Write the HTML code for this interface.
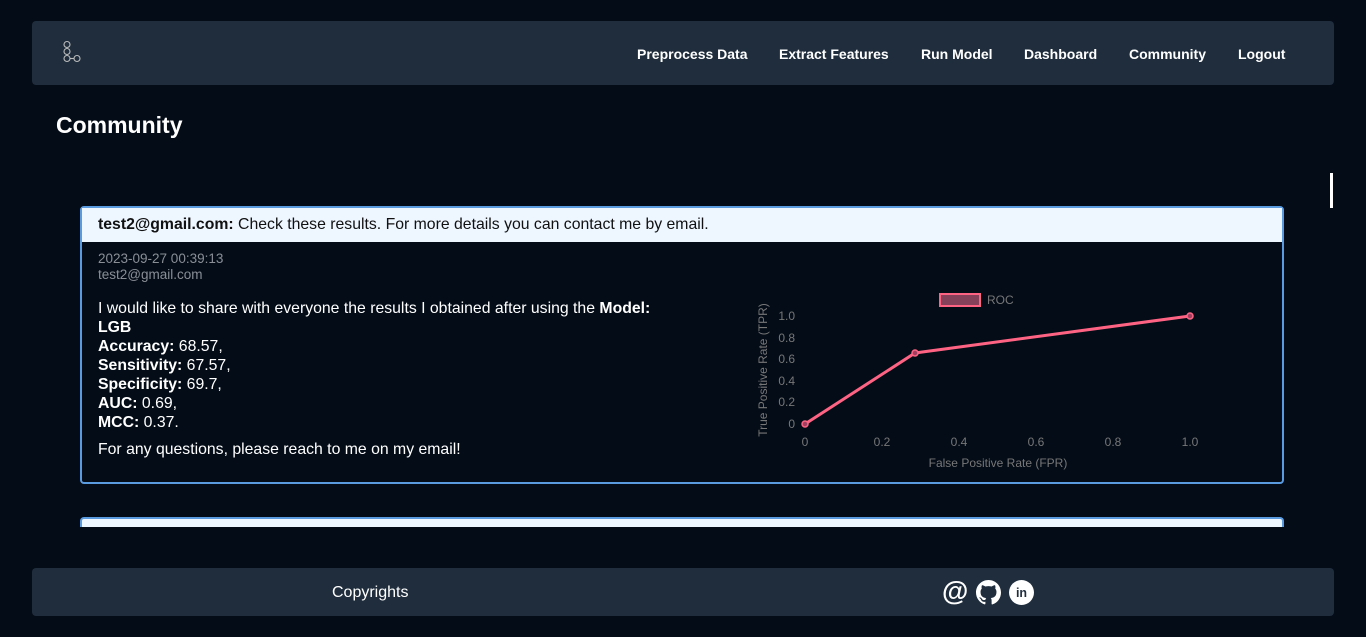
<!DOCTYPE html>
<html><head><meta charset="utf-8"><style>
body{margin:0;background:#040c17;width:1366px;height:637px;overflow:hidden;font-family:"Liberation Sans",sans-serif;position:relative;color:#fff}
.nav{position:absolute;left:32px;top:21px;width:1302px;height:64px;background:#1f2d3d;border-radius:4px}
.nav a{position:absolute;top:25px;font-size:14px;font-weight:bold;color:#fff}
h1{position:absolute;left:56px;top:112px;margin:0;font-size:23px;font-weight:bold}
.card{position:absolute;left:80px;top:206px;width:1200px;height:274px;border:2px solid #5a9be0;border-radius:4px;background:#040c17}
.hd{background:#eef6ff;color:#111;height:34px;line-height:34px;padding-left:16px;font-size:15.8px}
.meta{position:absolute;left:16px;top:43px;font-size:13.5px;color:#8a8f96;line-height:16px}
.body{position:absolute;left:16px;top:91px;font-size:15.8px;line-height:19px}
.card2{position:absolute;left:80px;top:517px;width:1200px;height:8px;border:2px solid #5a9be0;border-bottom:none;border-radius:4px 4px 0 0;background:#eef6ff}
.foot{position:absolute;left:32px;top:568px;width:1302px;height:48px;background:#1f2d3d;border-radius:4px}
</style></head><body>
<div class="nav">
<svg style="position:absolute;left:29px;top:19px" width="24" height="28" viewBox="0 0 24 28" fill="none" stroke="#bbb" stroke-width="1.1"><circle cx="6" cy="4.5" r="3"/><circle cx="6" cy="11.5" r="3"/><circle cx="6" cy="18.5" r="3"/><circle cx="16" cy="18.5" r="3"/><line x1="9" y1="18.5" x2="13" y2="18.5"/></svg>
<a style="left:605px">Preprocess Data</a><a style="left:747px">Extract Features</a><a style="left:889px">Run Model</a><a style="left:992px">Dashboard</a><a style="left:1097px">Community</a><a style="left:1206px">Logout</a>
</div>
<h1>Community</h1>
<div style="position:absolute;left:1330px;top:173px;width:3px;height:35px;background:#fff"></div>
<div class="card">
<div class="hd"><b>test2@gmail.com:</b> Check these results. For more details you can contact me by email.</div>
<div class="meta">2023-09-27 00:39:13<br>test2@gmail.com</div>
<div class="body">I would like to share with everyone the results I obtained after using the <b>Model:</b><br><b>LGB</b><br><b>Accuracy:</b> 68.57,<br><b>Sensitivity:</b> 67.57,<br><b>Specificity:</b> 69.7,<br><b>AUC:</b> 0.69,<br><b>MCC:</b> 0.37.<div style="height:8px"></div>For any questions, please reach to me on my email!</div>
</div>
<svg style="position:absolute;left:0;top:0" width="1366" height="637" font-family="Liberation Sans, sans-serif" font-size="12" fill="#777">
<rect x="940" y="294" width="40" height="12" fill="#85405a" stroke="#ff6384" stroke-width="2"/>
<text x="987" y="304">ROC</text>
<g text-anchor="end"><text x="795" y="320">1.0</text><text x="795" y="342">0.8</text><text x="795" y="363">0.6</text><text x="795" y="385">0.4</text><text x="795" y="406">0.2</text><text x="795" y="428">0</text></g>
<g text-anchor="middle"><text x="805" y="446">0</text><text x="882" y="446">0.2</text><text x="959" y="446">0.4</text><text x="1036" y="446">0.6</text><text x="1113" y="446">0.8</text><text x="1190" y="446">1.0</text>
<text x="998" y="467">False Positive Rate (FPR)</text>
<text transform="translate(767,370) rotate(-90)">True Positive Rate (TPR)</text></g>
<polyline points="805,424 915,353 1190,316" fill="none" stroke="#ff6384" stroke-width="3"/>
<g fill="#a04060" stroke="#ff6384" stroke-width="1.5"><circle cx="805" cy="424" r="3"/><circle cx="915" cy="353" r="3"/><circle cx="1190" cy="316" r="3"/></g>
</svg>
<div class="card2"></div>
<div class="foot">
<div style="position:absolute;left:300px;top:16px;font-size:16px">Copyrights</div>
<div style="position:absolute;left:910px;top:8px;font-size:27px;font-weight:bold;line-height:30px">@</div>
<svg style="position:absolute;left:944px;top:12px" width="25" height="25" viewBox="0 0 16 16" fill="#fff"><path d="M8 0C3.58 0 0 3.580 0 8c0 3.54 2.29 6.53 5.47 7.59.4.07.55-.17.55-.38v-1.33c-2.230.48-2.7-1.07-2.7-1.07-.36-.92-.89-1.17-.89-1.17-.73-.5.05-.49.05-.49.8.06 1.23.83 1.23.83.71 1.22 1.87.87 2.33.66.07-.52.28-.87.5-1.07-1.78-.2-3.64-.89-3.64-3.95 0-.87.31-1.590.82-2.15-.08-.2-.36-1.02.08-2.12 0 0 .67-.21 2.2.82.64-.18 1.32-.27 2-.27s1.36.09 2 .27c1.53-1.04 2.2-.82 2.2-.82.44 1.1.16 1.92.08 2.12.51.56.82 1.27.82 2.15 0 3.07-1.87 3.75-3.65 3.95.29.25.54.73.54 1.48v2.2c0 .21.15.46.55.38A8 8 0 0016 8c0-4.42-3.58-8-8-8z"/></svg>
<svg style="position:absolute;left:977px;top:12px" width="25" height="25" viewBox="0 0 24 24"><circle cx="12" cy="12" r="12" fill="#fff"/><text x="12" y="16.5" text-anchor="middle" font-family="Liberation Sans" font-weight="bold" font-size="12" fill="#1f2d3d">in</text></svg>
</div>
</body></html>
